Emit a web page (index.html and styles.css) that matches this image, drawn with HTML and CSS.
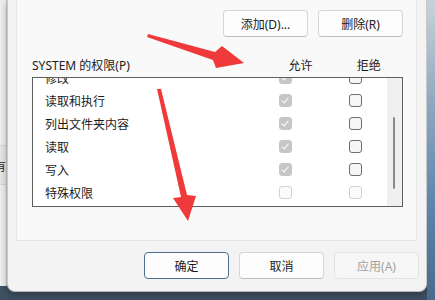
FILE: index.html
```html
<!DOCTYPE html>
<html lang="zh-CN">
<head>
  <meta charset="UTF-8">
  <title>SYSTEM 的权限</title>
  <link rel="stylesheet" href="styles.css">
</head>
<body>
  <div class="screen">
    <div class="behind">
      <div class="behind-row"><span class="behind-text">有</span></div>
    </div>

    <div class="dialog">
      <div class="panel">
        <div class="button-row">
          <button class="btn">添加(D)...</button>
          <button class="btn">删除(R)</button>
        </div>

        <div class="perm-header">
          <span class="perm-title">SYSTEM 的权限(P)</span>
          <span class="col-head">允许</span>
          <span class="col-head">拒绝</span>
        </div>

        <div class="perm-list">
          <div class="perm-rows">
            <div class="perm-row">
              <span class="perm-name">修改</span>
              <span class="check checked"></span>
              <span class="check"></span>
            </div>
            <div class="perm-row">
              <span class="perm-name">读取和执行</span>
              <span class="check checked"></span>
              <span class="check"></span>
            </div>
            <div class="perm-row">
              <span class="perm-name">列出文件夹内容</span>
              <span class="check checked"></span>
              <span class="check"></span>
            </div>
            <div class="perm-row">
              <span class="perm-name">读取</span>
              <span class="check checked"></span>
              <span class="check"></span>
            </div>
            <div class="perm-row">
              <span class="perm-name">写入</span>
              <span class="check checked"></span>
              <span class="check"></span>
            </div>
            <div class="perm-row">
              <span class="perm-name">特殊权限</span>
              <span class="check disabled"></span>
              <span class="check disabled"></span>
            </div>
          </div>
          <div class="scroll-track">
            <div class="scroll-thumb"></div>
          </div>
        </div>
      </div>

      <div class="footer">
        <button class="btn btn-default">确定</button>
        <button class="btn">取消</button>
        <button class="btn" disabled>应用(A)</button>
      </div>
    </div>

    <div class="desktop"></div>
  </div>

  <!-- red annotation arrows drawn over the dialog -->
  <svg class="arrows" width="435" height="300" viewBox="0 0 435 300">
    <polygon points="148,34 215,52 222,46 244,63 216,68 213,60 147,37" fill="#f0393b"/>
    <polygon points="157,89 161,89 187,195 196,196 188,221 173,198 181,197" fill="#f0393b"/>
  </svg>
</body>
</html>
```

FILE: styles.css
```css
body {
  margin: 0;
  width: 435px;
  height: 300px;
  overflow: hidden;
  font-family: "Noto Sans", "Noto Sans CJK SC", sans-serif;
  font-size: 12px;
  color: #1b1b1b;
  background: linear-gradient(180deg, #4f6478 0%, #3e5062 100%);
  position: relative;
}

.screen {
  display: flex;
  align-items: flex-start;
  height: 300px;
}

/* window peeking out behind the dialog */
.behind {
  width: 7px;
  height: 286px;
  background: #f1f1f1;
  border-right: 1px solid #cfcfcf;
  box-sizing: border-box;
  overflow: hidden;
}

.behind-row {
  margin-top: 145px;
  height: 38px;
  border-top: 1px solid #d8d8d8;
  border-bottom: 1px solid #d8d8d8;
  background: #e9e9e9;
  display: flex;
  align-items: center;
}

.behind-text {
  margin-left: -6px;
  font-family: "Noto Sans CJK SC", sans-serif;
  font-size: 12px;
}

.dialog {
  width: 420px;
  height: 292px;
  background: #f3f3f3;
  border-left: 1px solid #c9c9c9;
  border-right: 1px solid #c9c9c9;
  border-bottom: 1px solid #b8b8b8;
  border-radius: 0 0 8px 8px;
  box-sizing: border-box;
  display: flex;
  flex-direction: column;
  box-shadow: 0 2px 8px rgba(0, 0, 0, 0.35);
}

.desktop {
  flex: 1;
  height: 300px;
  background: linear-gradient(180deg, #c9d2da 0%, #8ea7bf 35%, #5c83ab 70%, #4a6a8c 100%);
}

.panel {
  flex: 1;
  margin: 0 9px 0 8px;
  padding: 10px 13px 0 15px;
  background: #f9f9f9;
  border-left: 1px solid #e6e6e6;
  border-right: 1px solid #e6e6e6;
  border-bottom: 1px solid #e3e3e3;
}

.button-row {
  display: flex;
  justify-content: flex-end;
  gap: 10px;
}

.btn {
  width: 85px;
  height: 27px;
  padding: 0;
  font-family: "Noto Sans", "Noto Sans CJK SC", sans-serif;
  font-size: 12px;
  color: #1b1b1b;
  background: #fdfdfd;
  border: 1px solid #d6d6d6;
  border-bottom-color: #bdbdbd;
  border-radius: 4px;
}

.btn-default {
  border-color: #4d6f8e;
}

.btn:disabled {
  background: #f6f6f6;
  border-color: #e4e4e4;
  color: #a3a3a3;
}

.perm-header {
  display: flex;
  align-items: center;
  height: 16px;
  margin: 20px 0 4px;
}

.perm-title {
  width: 240px;
}

.col-head {
  width: 70px;
  text-align: center;
}

.perm-list {
  height: 130px;
  background: #ffffff;
  border: 1px solid #5f5f5f;
  box-sizing: border-box;
  display: flex;
  overflow: hidden;
}

.perm-rows {
  flex: 1;
  margin-top: -12px;
}

.perm-row {
  display: flex;
  align-items: center;
  height: 23px;
  padding-left: 12px;
}

.perm-name {
  width: 234px;
}

.check {
  width: 13px;
  height: 13px;
  box-sizing: border-box;
  border: 1px solid #6e6e6e;
  border-radius: 3px;
  background: #f6f6f6;
  margin-right: 57px;
  position: relative;
}

.check:last-child {
  margin-right: 0;
}

.check.checked {
  background: #c6c6c6;
  border-color: #c6c6c6;
}

.check.checked::after {
  content: "";
  position: absolute;
  left: 3px;
  top: 1px;
  width: 3px;
  height: 6px;
  border-right: 1.5px solid #ffffff;
  border-bottom: 1.5px solid #ffffff;
  transform: rotate(40deg);
}

.check.disabled {
  border-color: #d2d2d2;
  background: #fbfbfb;
}

.scroll-track {
  width: 15px;
  background: #f0f0f0;
  padding-top: 39px;
  box-sizing: border-box;
}

.scroll-thumb {
  width: 2px;
  height: 72px;
  margin-left: 6px;
  background: #8a8a8a;
  border-radius: 1px;
}

.footer {
  height: 50px;
  box-sizing: border-box;
  padding: 11px 7px 0 0;
  display: flex;
  justify-content: flex-end;
  gap: 10px;
}

.arrows {
  position: absolute;
  left: 0;
  top: 0;
  pointer-events: none;
}
```
